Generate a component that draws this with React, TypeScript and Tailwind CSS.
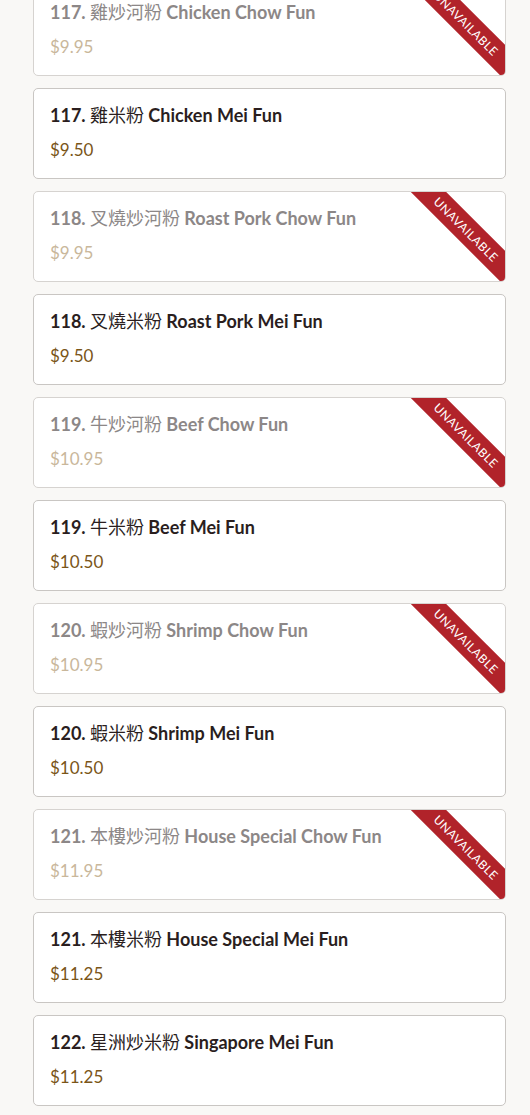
import React from "react";

type Item = { num: string; zh: string; en: string; price: string; unavailable?: boolean };

const items: Item[] = [
  { num: "117.", zh: "雞炒河粉", en: "Chicken Chow Fun", price: "$9.95", unavailable: true },
  { num: "117.", zh: "雞米粉", en: "Chicken Mei Fun", price: "$9.50" },
  { num: "118.", zh: "叉燒炒河粉", en: "Roast Pork Chow Fun", price: "$9.95", unavailable: true },
  { num: "118.", zh: "叉燒米粉", en: "Roast Pork Mei Fun", price: "$9.50" },
  { num: "119.", zh: "牛炒河粉", en: "Beef Chow Fun", price: "$10.95", unavailable: true },
  { num: "119.", zh: "牛米粉", en: "Beef Mei Fun", price: "$10.50" },
  { num: "120.", zh: "蝦炒河粉", en: "Shrimp Chow Fun", price: "$10.95", unavailable: true },
  { num: "120.", zh: "蝦米粉", en: "Shrimp Mei Fun", price: "$10.50" },
  { num: "121.", zh: "本樓炒河粉", en: "House Special Chow Fun", price: "$11.95", unavailable: true },
  { num: "121.", zh: "本樓米粉", en: "House Special Mei Fun", price: "$11.25" },
  { num: "122.", zh: "星洲炒米粉", en: "Singapore Mei Fun", price: "$11.25" },
];

function Card({ item }: { item: Item }) {
  const off = !!item.unavailable;
  return (
    <div
      className={`relative h-[91px] shrink-0 overflow-hidden rounded-[5px] border bg-white px-4 pt-[14px] ${
        off ? "border-[#d6d3d0]" : "border-[#c9c6c3]"
      }`}
    >
      <div
        className={`text-[18px] font-bold leading-[22px] ${off ? "text-[#8c8787]" : "text-[#2a1e1e]"}`}
      >
        {item.num}{" "}
        <span style={{ fontFamily: '"Noto Sans CJK TC", sans-serif' }} className="font-normal">
          {item.zh}
        </span>{" "}
        {item.en}
      </div>
      <div className={`mt-[14px] text-[17px] leading-[20px] ${off ? "text-[#c9b79b]" : "text-[#7a5518]"}`}>
        {item.price}
      </div>
      {off && (
        <div className="pointer-events-none absolute right-[-46px] top-[25px] flex h-[25px] w-[170px] rotate-45 items-center justify-center bg-[#b1232a] text-[12px] tracking-[0.5px] text-white">
          UNAVAILABLE
        </div>
      )}
    </div>
  );
}

export default function App() {
  return (
    <div
      className="min-h-[1115px] overflow-hidden bg-[#f9f8f6] pl-[33px] pr-[24px]"
      style={{ fontFamily: 'Lato, "Noto Sans CJK TC", sans-serif' }}
    >
      <div className="mt-[-15px] flex flex-col gap-[12px]">
        {items.map((it, i) => (
          <Card key={i} item={it} />
        ))}
      </div>
    </div>
  );
}
